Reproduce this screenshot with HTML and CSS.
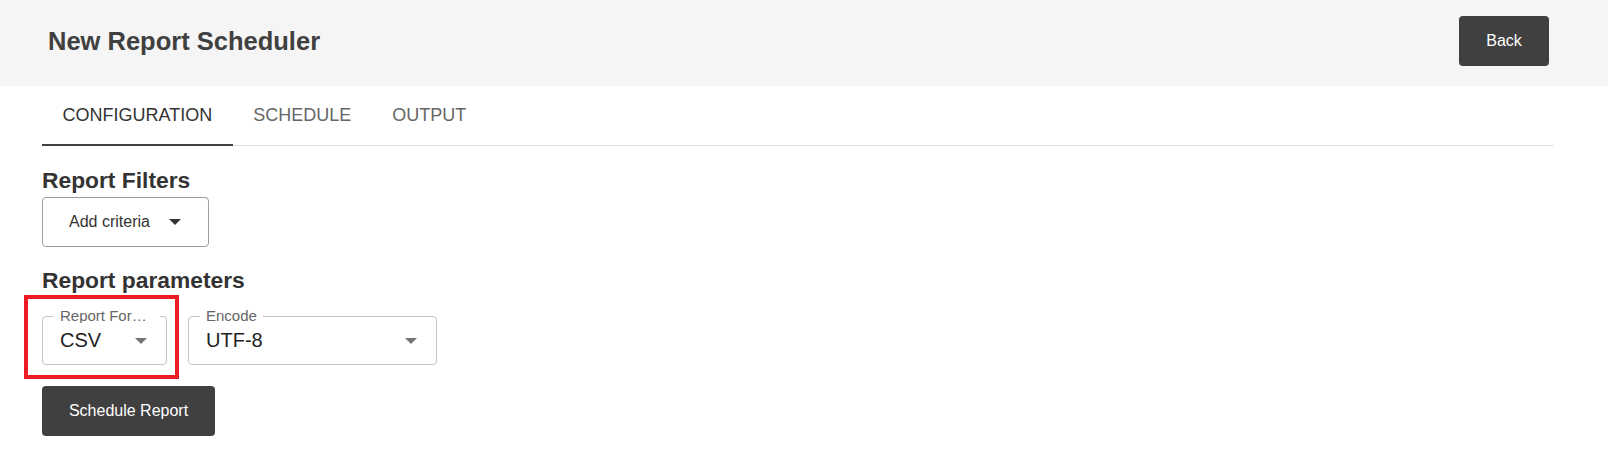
FILE: index.html
```html
<!DOCTYPE html>
<html lang="en">
<head>
<meta charset="utf-8">
<title>New Report Scheduler</title>
<link rel="stylesheet" href="styles.css">
</head>
<body>
<header class="topbar">
  <h1 class="title">New Report Scheduler</h1>
  <button class="btn btn-dark btn-back">Back</button>
</header>
<main class="content">
  <nav class="tabs">
    <div class="tab tab-active">CONFIGURATION<span class="indicator"></span></div>
    <div class="tab">SCHEDULE</div>
    <div class="tab">OUTPUT</div>
  </nav>
  <h2 class="section-title first">Report Filters</h2>
  <button class="btn-outline">
    <span>Add criteria</span>
    <svg class="caret caret-dark" width="12" height="6" viewBox="0 0 10 5"><path d="M0 0l5 5 5-5z"/></svg>
  </button>
  <h2 class="section-title second">Report parameters</h2>
  <div class="fields">
    <div class="field field-format">
      <span class="field-label">Report Format</span>
      <span class="field-value">CSV</span>
      <svg class="caret" width="12" height="6" viewBox="0 0 10 5"><path d="M0 0l5 5 5-5z"/></svg>
      <span class="highlight"></span>
    </div>
    <div class="field field-encode">
      <span class="field-label">Encode</span>
      <span class="field-value">UTF-8</span>
      <svg class="caret" width="12" height="6" viewBox="0 0 10 5"><path d="M0 0l5 5 5-5z"/></svg>
    </div>
  </div>
  <button class="btn btn-dark btn-submit">Schedule Report</button>
</main>
</body>
</html>
```
FILE: styles.css
```css
* { box-sizing: border-box; }

body {
  margin: 0;
  font-family: "Liberation Sans", Arial, sans-serif;
  background: #ffffff;
  color: #333333;
}

.topbar {
  height: 86px;
  background: #f5f5f5;
  display: flex;
  align-items: center;
  justify-content: space-between;
  padding: 0 59px 4px 48px;
}

.title {
  margin: 0;
  font-size: 25.5px;
  font-weight: 700;
  color: #404040;
}

.btn {
  font-family: inherit;
  font-size: 16px;
  border: none;
  border-radius: 4px;
  cursor: pointer;
}

.btn-dark {
  background: #404040;
  color: #ffffff;
  height: 50px;
  padding: 0 27px;
}

.btn-back {
  width: 90px;
  padding: 0;
}

.content {
  padding: 0 54px 0 42px;
}

.tabs {
  display: flex;
  height: 60px;
  border-bottom: 1px solid #e0e0e0;
}

.tab {
  position: relative;
  display: flex;
  align-items: center;
  padding: 0 20.5px;
  font-size: 18px;
  color: #666666;
}

.tab-active {
  color: #333333;
}

.indicator {
  position: absolute;
  left: 0;
  right: 0;
  bottom: -1px;
  height: 2px;
  background: #404040;
}

.section-title {
  margin: 0;
  font-size: 22.8px;
  line-height: 26px;
  font-weight: 700;
  color: #333333;
}

.section-title.first { margin-top: 21px; }
.section-title.second { margin-top: 20px; }

.btn-outline {
  margin-top: 4px;
  display: flex;
  align-items: center;
  height: 50px;
  width: 167px;
  padding: 0 0 0 26px;
  background: #ffffff;
  border: 1px solid #9e9e9e;
  border-radius: 4px;
  font-family: inherit;
  font-size: 16px;
  color: #333333;
}

.btn-outline .caret {
  margin-left: 19px;
}

.caret {
  display: block;
  fill: #757575;
  flex: none;
}

.caret-dark { fill: #333333; }

.fields {
  display: flex;
  gap: 21px;
  margin-top: 23px;
}

.field {
  position: relative;
  display: flex;
  align-items: center;
  height: 49px;
  padding: 0 19px 0 17px;
  border: 1px solid #c4c4c4;
  border-radius: 4px;
}

.field-format { width: 125px; }
.field-encode { width: 249px; }

.field-label {
  position: absolute;
  top: -9px;
  left: 11px;
  padding: 0 6px;
  background: #ffffff;
  font-size: 15px;
  line-height: 15px;
  color: #666666;
  max-width: 106px;
  white-space: nowrap;
  overflow: hidden;
  text-overflow: ellipsis;
}

.field-value {
  flex: 1;
  font-size: 20px;
  color: #222222;
}

.field .caret {
  margin-top: 1px;
}

.highlight {
  position: absolute;
  left: -19px;
  top: -22px;
  right: -13px;
  bottom: -15px;
  border: 4px solid #ed1c24;
  pointer-events: none;
}

.btn-submit {
  display: block;
  margin-top: 21px;
  width: 173px;
  padding: 0;
}
```
